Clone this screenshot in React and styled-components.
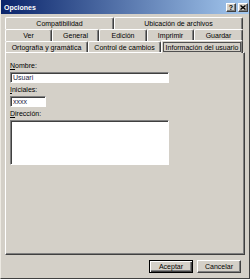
import styled, { createGlobalStyle } from "styled-components";

const GlobalStyle = createGlobalStyle`
  html, body {
    margin: 0;
    padding: 0;
    background: #d4d0c8;
  }
  body {
    font-family: "Liberation Sans", Arial, sans-serif;
  }
`;

const Window = styled.div`
  width: 250px;
  height: 279px;
  box-sizing: border-box;
  background: #d4d0c8;
  border-left: 1px solid #ece9e2;
  border-right: 1px solid #404040;
  border-bottom: 1px solid #404040;
  display: flex;
  flex-direction: column;
  font-size: 7px;
  color: #000;
`;

const TitleBar = styled.div`
  height: 14px;
  display: flex;
  align-items: center;
  justify-content: space-between;
  padding: 0 1px 0 3px;
  background: linear-gradient(to right, #0a246a, #a6caf0);
  color: #fff;
  font-weight: bold;
  font-size: 7px;
`;

const TitleButtons = styled.div`
  display: flex;
  gap: 2px;
`;

const TitleButton = styled.div`
  width: 10px;
  height: 9px;
  box-sizing: border-box;
  background: #d4d0c8;
  border-top: 1px solid #fff;
  border-left: 1px solid #fff;
  border-right: 1px solid #404040;
  border-bottom: 1px solid #404040;
  box-shadow: inset -1px -1px #808080;
  display: flex;
  align-items: center;
  justify-content: center;
  color: #000;
  font-size: 7px;
  font-weight: bold;
  line-height: 7px;
`;

const Body = styled.div`
  padding: 3px 4px 0 4px;
  display: flex;
  flex-direction: column;
`;

const TabRow = styled.div`
  display: flex;
  width: 238px;
  height: ${(p) => p.h}px;
`;

const Tab = styled.div`
  width: ${(p) => p.w}px;
  box-sizing: border-box;
  background: #d4d0c8;
  border-top: 1px solid #fff;
  border-left: 1px solid #fff;
  border-right: 1px solid #404040;
  border-radius: 2px 2px 0 0;
  box-shadow: inset -1px 0 #808080;
  display: flex;
  align-items: center;
  justify-content: center;
  white-space: nowrap;
  line-height: 9px;
  ${(p) =>
    p.active &&
    `
    position: relative;
    z-index: 1;
    margin-top: -1px;
    margin-bottom: -1px;
  `}
`;

const Focus = styled.span`
  display: flex;
  align-items: center;
  height: 10px;
  box-sizing: border-box;
  border: 1px solid #505050;
  padding: 0 2px;
`;

const Panel = styled.div`
  width: 240px;
  height: 203px;
  box-sizing: border-box;
  border-top: 1px solid #fff;
  border-left: 1px solid #fff;
  border-right: 1px solid #404040;
  border-bottom: 1px solid #404040;
  box-shadow: inset -1px -1px #808080;
  padding: 8px 0 0 4px;
  display: flex;
  flex-direction: column;
  gap: 2px;
`;

const Field = styled.div`
  display: flex;
  flex-direction: column;
`;

const Label = styled.label`
  display: block;
  height: 9px;
  line-height: 9px;
  margin-bottom: 2px;
`;

const TextBox = styled.input`
  width: ${(p) => p.w}px;
  height: 11px;
  box-sizing: border-box;
  margin: 0;
  padding: 0 2px;
  background: #fff;
  border-top: 1px solid #808080;
  border-left: 1px solid #808080;
  border-right: 1px solid #fff;
  border-bottom: 1px solid #fff;
  box-shadow: inset 1px 1px #404040;
  font-family: "Liberation Sans", Arial, sans-serif;
  font-size: 7px;
  color: #1c1c44;
  outline: none;
`;

const TextArea = styled.textarea`
  width: 159px;
  height: 45px;
  box-sizing: border-box;
  margin: 0;
  padding: 1px 2px;
  resize: none;
  background: #fff;
  border-top: 1px solid #808080;
  border-left: 1px solid #808080;
  border-right: 1px solid #fff;
  border-bottom: 1px solid #fff;
  box-shadow: inset 1px 1px #404040;
  font-family: "Liberation Sans", Arial, sans-serif;
  font-size: 7px;
  outline: none;
`;

const ButtonRow = styled.div`
  display: flex;
  justify-content: flex-end;
  gap: 4px;
  margin-top: 5px;
  padding-right: 4px;
`;

const Button = styled.div`
  width: 44px;
  height: 13px;
  box-sizing: border-box;
  background: #d4d0c8;
  border-top: 1px solid ${(p) => (p.primary ? "#000" : "#fff")};
  border-left: 1px solid ${(p) => (p.primary ? "#000" : "#fff")};
  border-right: 1px solid ${(p) => (p.primary ? "#000" : "#404040")};
  border-bottom: 1px solid ${(p) => (p.primary ? "#000" : "#404040")};
  box-shadow: ${(p) =>
    p.primary
      ? "inset 1px 1px #fff, inset -1px -1px #404040, inset -2px -2px #808080"
      : "inset -1px -1px #808080"};
  display: flex;
  align-items: center;
  justify-content: center;
  line-height: 9px;
`;

export default function App() {
  return (
    <>
      <GlobalStyle />
      <Window>
        <TitleBar>
          <span>Opciones</span>
          <TitleButtons>
            <TitleButton>?</TitleButton>
            <TitleButton>
              <svg width="6" height="5" viewBox="0 0 6 5">
                <path d="M0.5 0.5 L5.5 4.5 M5.5 0.5 L0.5 4.5" stroke="#000" strokeWidth="1.4" />
              </svg>
            </TitleButton>
          </TitleButtons>
        </TitleBar>
        <Body>
          <TabRow h={12}>
            <Tab w={109}>Compatibilidad</Tab>
            <Tab w={129}>Ubicación de archivos</Tab>
          </TabRow>
          <TabRow h={12}>
            <Tab w={47}>Ver</Tab>
            <Tab w={47}>General</Tab>
            <Tab w={48}>Edición</Tab>
            <Tab w={47}>Imprimir</Tab>
            <Tab w={49}>Guardar</Tab>
          </TabRow>
          <TabRow h={11}>
            <Tab w={83}>Ortografía y gramática</Tab>
            <Tab w={73}>Control de cambios</Tab>
            <Tab w={82} active>
              <Focus>Información del usuario</Focus>
            </Tab>
          </TabRow>
          <Panel>
            <Field>
              <Label>
                <u>N</u>ombre:
              </Label>
              <TextBox w={159} defaultValue="Usuari" readOnly />
            </Field>
            <Field>
              <Label>
                <u>I</u>niciales:
              </Label>
              <TextBox w={36} defaultValue="xxxx" readOnly />
            </Field>
            <Field>
              <Label>
                <u>D</u>irección:
              </Label>
              <TextArea readOnly />
            </Field>
          </Panel>
          <ButtonRow>
            <Button primary>Aceptar</Button>
            <Button>Cancelar</Button>
          </ButtonRow>
        </Body>
      </Window>
    </>
  );
}
